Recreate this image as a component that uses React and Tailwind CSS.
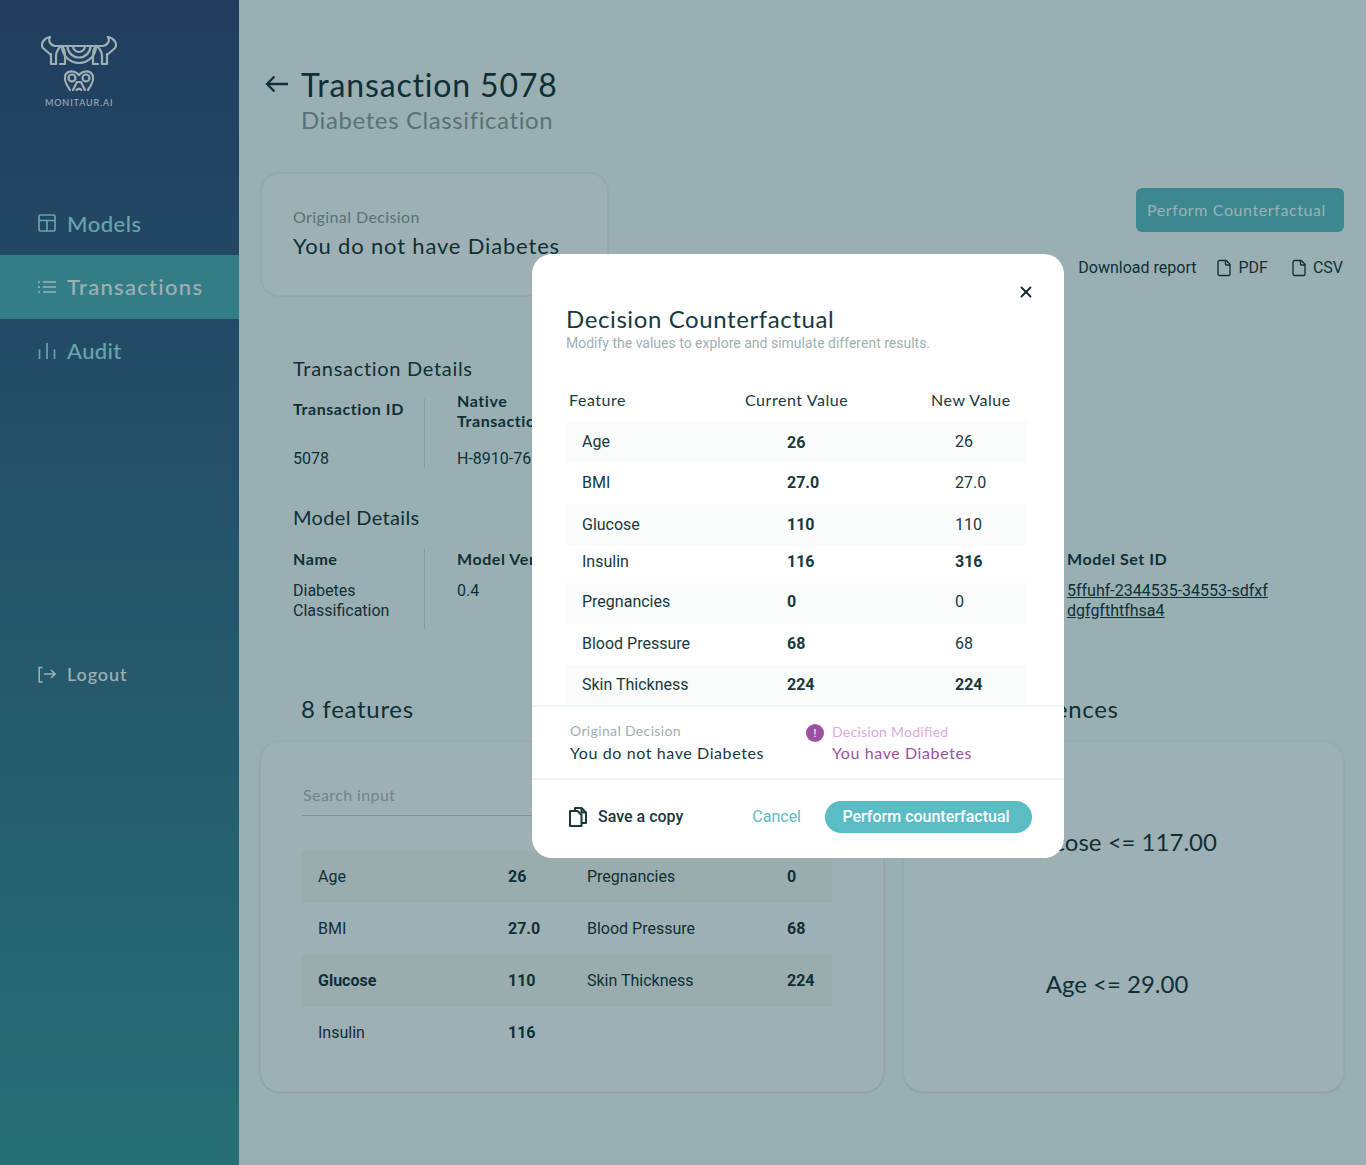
import React from "react";
import { File, X } from "lucide-react";

const head = "font-['Lato',sans-serif]";

function Logo() {
  return (
    <svg width="76" height="56" viewBox="0 0 76 56" fill="none" stroke="white" strokeWidth="2.2" strokeLinejoin="round" strokeLinecap="round">
      <path d="M9 1C3 2-1 8 2 12l8 7" />
      <path d="M67 1c6 1 10 7 7 11l-8 7" />
      <path d="M9 1C7 5 9 9 14 10h48c5-1 7-5 5-9" />
      <path d="M32 10a6 6 0 0 0 12 0M26.500 10a11.500 11.500 0 0 0 23 0M21 10a17 17 0 0 0 34 0" />
      <path d="M10 18v10h5v-8q0-5 5-10M19 28h5v-9q0-5-3-9" />
      <path d="M66 18v10h-5v-8q0-5-5-10M57 28h-5v-9q0-5 3-9" />
      <circle cx="31" cy="42" r="3.500" />
      <circle cx="45" cy="42" r="3.500" />
      <path d="M38 39C35 35 28 34 25 38C22 42 24 47 29 54M38 39C41 35 48 34 51 38C54 42 52 47 47 54" />
      <path d="M32 54l4-8h4l4 8M35.500 54q2.500-2.500 5 0" />
    </svg>
  );
}

function ModelsIcon() {
  return (
    <svg width="18" height="18" viewBox="0 0 18 18" fill="none" stroke="currentColor" strokeWidth="1.7">
      <rect x="1" y="1" width="16" height="16" rx="1.5" />
      <path d="M1 6.500h16M9 6.500V17" />
    </svg>
  );
}
function ListIcon() {
  return (
    <svg width="18" height="14" viewBox="0 0 18 14" fill="none" stroke="currentColor" strokeWidth="1.7">
      <path d="M5 2h13M5 7h13M5 12h13M0 2h2M0 7h2M0 12h2" />
    </svg>
  );
}
function AuditIcon() {
  return (
    <svg width="18" height="18" viewBox="0 0 18 18" fill="none" stroke="currentColor" strokeWidth="1.7">
      <path d="M1.500 7.500V17M9 1v16M16.500 7.500V17" />
    </svg>
  );
}
function LogoutIcon() {
  return (
    <svg width="18" height="18" viewBox="0 0 18 18" fill="none" stroke="currentColor" strokeWidth="1.6">
      <path d="M4.500 1.500H1.200v14.500h3.300M6 8h11M13 4l4 4-4 4" />
    </svg>
  );
}
function BackArrow() {
  return (
    <svg width="23" height="18" viewBox="0 0 23 18" fill="none" stroke="currentColor" strokeWidth="2.3" className="mt-[10px] shrink-0">
      <path d="M23 9H2M9.500 1.500 2 9l7.500 7.500" />
    </svg>
  );
}
function CopyIcon() {
  return (
    <svg width="18" height="20" viewBox="0 0 18 20" fill="none" stroke="#17393d" strokeWidth="2" strokeLinejoin="round">
      <path d="M6 4V1h6.500L17 5.500V16h-4" />
      <path d="M12.500 1v4.500H17" />
      <path d="M1 4h7.500l4 4v11H1z" />
    </svg>
  );
}

function NavItem({ icon, label, active, track }) {
  return (
    <div className={`flex h-16 items-center pl-[38px] text-[22px] font-medium ${active ? "bg-[#4eacb2] text-white" : "text-[#a3ebf3]"} ${head}`}>
      <span className="flex w-[29px] shrink-0">{icon}</span>
      <span className={track}>{label}</span>
    </div>
  );
}

const modalRows = [
  ["Age", "26", "26", false, "h-[41px]", true, "pt-[2px]"],
  ["BMI", "27.0", "27.0", false, "h-[42px] pb-px", false, ""],
  ["Glucose", "110", "110", false, "h-[41px]", true, ""],
  ["Insulin", "116", "316", true, "h-[37px] pb-[4px]", false, ""],
  ["Pregnancies", "0", "0", false, "h-[42px] pb-[2px]", true, ""],
  ["Blood Pressure", "68", "68", false, "h-[41px] pb-[2px]", false, ""],
  ["Skin Thickness", "224", "224", true, "h-[41px] pb-[2px]", true, ""],
];

const features = [
  ["Age", "26", "Pregnancies", "0", true, false],
  ["BMI", "27.0", "Blood Pressure", "68", false, false],
  ["Glucose", "110", "Skin Thickness", "224", true, true],
  ["Insulin", "116", "", "", false, false],
];

function Modal() {
  return (
    <div className="absolute left-[532px] top-[254px] h-[604px] w-[532px] overflow-hidden rounded-[20px] bg-white text-[#17393d]">
      <X className="absolute right-[29px] top-[29px] text-[#0f2a2e]" size={18} strokeWidth={2.4} />
      <div className="h-[451px] overflow-hidden pl-[34px] pt-[50px]">
        <h2 className={`text-[24px] leading-[29px] tracking-[0.6px] ${head}`}>Decision Counterfactual</h2>
        <p className="text-[14px] leading-5 text-[#a0b0b2]">Modify the values to explore and simulate different results.</p>
        <div className={`mt-[37px] grid h-[31px] grid-cols-[176px_186px_1fr] pl-[3px] text-[16px] leading-5 tracking-[0.55px] ${head}`}>
          <span>Feature</span>
          <span>Current Value</span>
          <span>New Value</span>
        </div>
        <div className="w-[461px]">
          {modalRows.map(([f, c, n, bold, h, shaded, nudge]) => (
            <div key={f} className={`grid grid-cols-[205px_168px_1fr] items-center pl-4 text-[16px] ${h} ${shaded ? "bg-[#fafbfb]" : ""}`}>
              <span>{f}</span>
              <span className={`font-bold ${nudge}`}>{c}</span>
              <span className={bold ? "font-bold" : ""}>{n}</span>
            </div>
          ))}
        </div>
      </div>
      <div className="flex h-[75px] border-y-2 border-[#eef3f3] pl-[38px] pt-[14px]">
        <div className="w-[236px]">
          <div className={`text-[14px] leading-5 tracking-[0.35px] text-[#a0b0b2] ${head}`}>Original Decision</div>
          <div className={`mt-[2px] text-[16px] leading-5 tracking-[0.6px] ${head}`}>You do not have Diabetes</div>
        </div>
        <div className="flex gap-2">
          <span className="mt-[3px] flex h-[18px] w-[18px] items-center justify-center rounded-full bg-[#9b519f] text-[11px] leading-none text-white">!</span>
          <div>
            <div className={`mt-[1px] text-[14px] leading-5 tracking-[0.25px] text-[#dba9dc] ${head}`}>Decision Modified</div>
            <div className={`mt-px text-[16px] leading-5 tracking-[0.6px] text-[#9b519f] ${head}`}>You have Diabetes</div>
          </div>
        </div>
      </div>
      <div className="flex items-center pl-[37px] pr-[32px] pt-[21px]">
        <CopyIcon />
        <span className="ml-[11px] text-[16px] font-medium">Save a copy</span>
        <span className="ml-auto text-[16px] text-[#5abcc4]">Cancel</span>
        <button className="ml-6 h-8 w-[207px] rounded-full bg-[#5abcc4] pr-[5px] text-[16px] font-medium text-white">Perform counterfactual</button>
      </div>
    </div>
  );
}

export default function App() {
  return (
    <div className="relative flex h-[1165px] overflow-hidden bg-[#f9fefc] font-['Roboto',sans-serif] text-[#0f2a2e]">
      <aside className="flex w-[239px] shrink-0 flex-col bg-gradient-to-b from-[#2f4071] to-[#379396]">
        <div className="flex h-[191px] flex-col items-start pl-[41px] pt-[36px]">
          <Logo />
          <span className={`ml-[4px] mt-[5px] text-[9px] leading-3 tracking-[0.9px] text-white ${head}`}>MONITAUR.AI</span>
        </div>
        <NavItem icon={<ModelsIcon />} label="Models" track="tracking-[0.5px]" />
        <NavItem active icon={<ListIcon />} label="Transactions" track="-mt-[2px] tracking-[1.3px]" />
        <NavItem icon={<AuditIcon />} label="Audit" track="-mt-[2px] tracking-[0.4px]" />
        <div className={`mt-[278px] flex items-center pl-[38px] text-[18px] font-medium text-white ${head}`}>
          <span className="flex w-[29px] shrink-0"><LogoutIcon /></span>
          <span className="tracking-[0.9px]">Logout</span>
        </div>
      </aside>

      <main className="min-w-0 flex-1">
        <header className="flex pl-[26px] pt-[65px]">
          <BackArrow />
          <div className="ml-[13px]">
            <h1 className={`text-[32px] leading-10 tracking-[0.85px] ${head}`}>Transaction 5078</h1>
            <p className={`-mt-px text-[24px] leading-8 tracking-[0.6px] text-[#8c9899] ${head}`}>Diabetes Classification</p>
          </div>
        </header>

        <div className="mt-[36px] flex justify-between pl-[21px] pr-[22px]">
          <div className="h-[125px] w-[349px] rounded-[20px] border-2 border-[#eef3f3] bg-white pl-[31px] pt-[33px]">
            <div className={`text-[16px] leading-5 tracking-[0.41px] text-[#8c9899] ${head}`}>Original Decision</div>
            <div className={`mt-[5px] text-[22px] leading-7 tracking-[0.83px] ${head}`}>You do not have Diabetes</div>
          </div>
          <div className="flex flex-col items-end pt-[16px]">
            <button className={`h-11 w-[208px] rounded-[6px] bg-[#5abcc4] pr-[7px] text-[16px] tracking-[0.6px] text-white ${head}`}>Perform Counterfactual</button>
            <div className="mr-px mt-[26px] flex items-center text-[16px] leading-5">
              <span>Download report</span>
              <File size={18} className="ml-[19px]" strokeWidth={1.8} />
              <span className="ml-[5px]">PDF</span>
              <File size={18} className="ml-[22px]" strokeWidth={1.8} />
              <span className="ml-[5px]">CSV</span>
            </div>
          </div>
        </div>

        <section className="mt-[57px] pl-[54px]">
          <h3 className={`text-[20px] leading-7 tracking-[0.7px] ${head}`}>Transaction Details</h3>
          <div className="mt-[9px] grid grid-cols-[164px_1fr]">
            <div className="mt-[8px] h-[69px] w-[132px] border-r border-[#cfdcdc]">
              <div className={`text-[16px] font-bold leading-5 tracking-[0.57px] ${head}`}>Transaction ID</div>
              <div className="mt-[30px] text-[16px] leading-5">5078</div>
            </div>
            <div>
              <div className={`w-[120px] text-[16px] font-bold leading-5 tracking-[0.57px] ${head}`}>Native Transaction ID</div>
              <div className="mt-[18px] text-[16px] leading-5">H-8910-76</div>
            </div>
          </div>
          <h3 className={`mt-[34px] text-[20px] leading-7 tracking-[0.35px] ${head}`}>Model Details</h3>
          <div className="mt-[18px] grid grid-cols-[164px_610px_1fr]">
            <div className="h-[80px] w-[132px] border-r border-[#cfdcdc]">
              <div className={`text-[16px] font-bold leading-5 tracking-[0.57px] ${head}`}>Name</div>
              <div className="mt-[12px] text-[16px] leading-5">Diabetes Classification</div>
            </div>
            <div>
              <div className={`text-[16px] font-bold leading-5 tracking-[0.57px] ${head}`}>Model Version</div>
              <div className="mt-[12px] text-[16px] leading-5">0.4</div>
            </div>
            <div>
              <div className={`text-[16px] font-bold leading-5 tracking-[0.57px] ${head}`}>Model Set ID</div>
              <div className="mt-[12px] w-[215px] text-[16px] leading-5 underline">5ffuhf-2344535-34553-sdfxf dgfgfthtfhsa4</div>
            </div>
          </div>
        </section>

        <div className={`mt-[64px] flex text-[24px] leading-8 tracking-[0.7px] ${head}`}>
          <span className="ml-[62px]">8 features</span>
          <span className="ml-[543px]">Top Influences</span>
        </div>

        <div className="mt-[16px] flex gap-[19px] pl-[21px] pr-[22px]">
          <div className="h-[351px] w-[624px] rounded-[20px] border border-[#f3f7f7] bg-white pl-[41px] shadow-sm">
            <div className={`mt-[31px] flex h-[43px] w-[537px] items-center border-b border-[#c3cfcf] pl-[1px] pt-[2px] text-[16px] tracking-[0.4px] text-[#b0b9ba] ${head}`}>Search input</div>
            <div className="-ml-[1px] mt-[35px] w-[531px] text-[16px]">
              {features.map(([a, b, c, d, shaded, bold]) => (
                <div key={a} className={`grid h-[52px] grid-cols-[190px_79px_200px_1fr] items-center pl-[17px] ${shaded ? "bg-[#f8f9f5]" : ""}`}>
                  <span className={bold ? "font-bold" : ""}>{a}</span>
                  <span className="font-bold">{b}</span>
                  <span>{c}</span>
                  <span className="font-bold">{d}</span>
                </div>
              ))}
            </div>
          </div>
          <div className={`flex h-[351px] w-[441px] flex-col items-center rounded-[20px] border border-[#f3f7f7] bg-white pr-[13px] pt-[84px] text-[24px] leading-8 shadow-sm ${head}`}>
            <span>Glucose &lt;= 117.00</span>
            <span className="mt-[110px]">Age &lt;= 29.00</span>
          </div>
        </div>
      </main>

      <div className="absolute inset-0 bg-[#0c3943]/40" />
      <Modal />
    </div>
  );
}
